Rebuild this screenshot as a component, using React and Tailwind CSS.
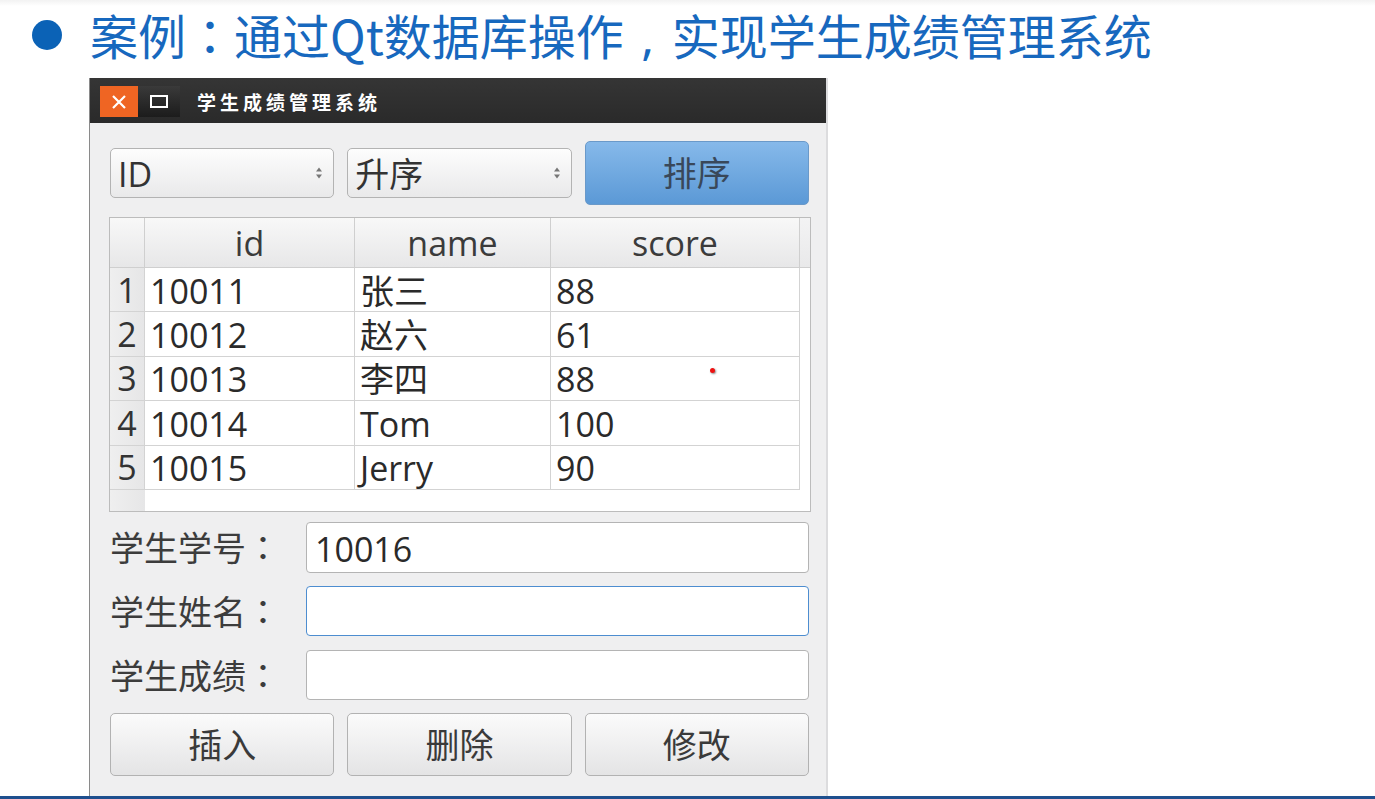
import React from "react";

const LAT = "font-['Open_Sans','Noto_Sans_CJK_SC',sans-serif]";
const TCP = "font-['Noto_Sans_CJK_TC',sans-serif]";

function Spinner() {
  return (
    <svg width="12" height="18" viewBox="0 0 12 18" className="shrink-0">
      <path d="M3 7.5 L6 3.5 L9 7.5 Z" fill="#767676" />
      <path d="M3 10.5 L6 14.5 L9 10.5 Z" fill="#767676" />
    </svg>
  );
}

function Combo({ text }) {
  return (
    <div className="h-[50px] self-center flex items-center justify-between pl-[7px] pr-[8px] rounded-[5px] border border-[#b3b3b3] bg-gradient-to-b from-[#fdfdfd] to-[#e9e9ea]">
      <span className={`${LAT} text-[34px] leading-none text-[#333] pt-[2px]`}>{text}</span>
      <Spinner />
    </div>
  );
}

function Btn({ text, blue }) {
  const cls = blue
    ? "h-[64px] border-[#6a99c9] bg-gradient-to-b from-[#86b9ea] to-[#5b99d6] text-[#39485a]"
    : "h-[63px] border-[#b2b2b2] bg-gradient-to-b from-[#fbfbfb] to-[#e4e4e5] text-[#3a3a3a]";
  return (
    <div className={`${cls} rounded-[5px] border flex items-center justify-center`}>
      <span className={`${LAT} text-[34px] leading-none`}>{text}</span>
    </div>
  );
}

const rows = [
  ["1", "10011", "张三", "88"],
  ["2", "10012", "赵六", "61"],
  ["3", "10013", "李四", "88"],
  ["4", "10014", "Tom", "100"],
  ["5", "10015", "Jerry", "90"],
];

function Table() {
  return (
    <div className="mt-[12px] -ml-px w-[702px] h-[295px] border border-[#bcbcbc] bg-white flex">
      <div className="flex flex-col">
        <div className="flex h-[50px] bg-gradient-to-b from-[#f8f8f8] to-[#e7e7e8] border-b border-[#cfcfcf]">
          <div className="w-[35px] border-r border-[#cfcfcf]" />
          {[["id", 210], ["name", 196], ["score", 249]].map(([t, w]) => (
            <div key={t} style={{ width: w }} className="border-r border-[#cfcfcf] flex items-center justify-center">
              <span className={`${LAT} text-[34px] leading-none text-[#3b3b3b]`}>{t}</span>
            </div>
          ))}
        </div>
        {rows.map((r) => (
          <div key={r[0]} className="flex h-[44.4px]">
            <div className="w-[35px] bg-gradient-to-r from-[#efefef] to-[#e6e6e7] border-r border-b border-[#d3d3d3] flex items-center justify-center">
              <span className={`${LAT} text-[34px] leading-none text-[#333]`}>{r[0]}</span>
            </div>
            {[[r[1], 210], [r[2], 196], [r[3], 249]].map(([t, w], i) => (
              <div key={i} style={{ width: w }} className="border-r border-b border-[#d3d3d3] flex items-center pl-[5px]">
                <span className={`${LAT} text-[34px] leading-none text-[#2a2a2a] pt-[2px]`}>{t}</span>
              </div>
            ))}
          </div>
        ))}
        <div className="flex-1 flex">
          <div className="w-[35px] bg-gradient-to-r from-[#efefef] to-[#e6e6e7]" />
        </div>
      </div>
      <div className="flex-1 flex flex-col">
        <div className="h-[50px] bg-gradient-to-b from-[#f3f3f4] to-[#e9e9ea] border-b border-[#cfcfcf]" />
      </div>
    </div>
  );
}

function Field({ label, value, focus, h, mt }) {
  return (
    <div className={`flex items-center ${mt}`}>
      <div className={`w-[196px] ${LAT} text-[34px] leading-none text-[#3c3c3c]`}>
        {label}
        <span className={TCP}>：</span>
      </div>
      <div
        className={`flex-1 ${h} rounded-[4px] bg-white flex items-center pl-[8px] ${
          focus ? "border-[1.5px] border-[#4d8dd0]" : "border border-[#b4b4b4]"
        }`}
      >
        <span className={`${LAT} text-[34px] leading-none text-[#2a2a2a] pt-[2px]`}>{value}</span>
      </div>
    </div>
  );
}

export default function App() {
  return (
    <div className="w-[1375px] h-[799px] bg-white relative overflow-hidden flex flex-col">
      <div className="h-[6px] bg-gradient-to-b from-[#f2f2f2] to-white" />
      <div className="flex items-center h-[62px] pl-[32px] -mt-[2px]">
        <div className="w-[30px] h-[30px] rounded-full bg-[#0b62b6]" />
        <div className="ml-[28px] font-['Noto_Sans_CJK_SC',sans-serif] text-[48px] leading-none text-[#1768be]">
          案例<span className={TCP}>：</span>通过Qt数据库操作
          <span className="inline-block w-[48px] text-center font-['Noto_Sans',sans-serif]">,</span>
          实现学生成绩管理系统
        </div>
      </div>
      <div className="ml-[89px] mt-[12px] w-[739px] h-[718px] flex flex-col bg-[#efeff0] border-l border-[#8a8a8a] border-r-2 border-r-[#dcdcde]">
        <div className="h-[45px] bg-gradient-to-b from-[#353535] to-[#2a2a2a] flex items-start pt-[8px] pl-[10px]">
          <div className="w-[38px] h-[31px] bg-[#ef6523] flex items-center justify-center">
            <svg width="16" height="16" viewBox="0 0 16 16">
              <path d="M2 2 L14 14 M14 2 L2 14" stroke="white" strokeWidth="2.2" />
            </svg>
          </div>
          <div className="w-[42px] h-[31px] bg-gradient-to-b from-[#3a3a3a] to-[#1c1c1c] flex items-center justify-center">
            <div className="w-[18px] h-[13px] border-2 border-white" />
          </div>
          <div className="ml-[17px] mt-[6px] font-['Noto_Sans_CJK_SC',sans-serif] font-bold text-[19px] tracking-[4px] leading-none text-white">
            学生成绩管理系统
          </div>
        </div>
        <div className="flex-1 flex flex-col pl-[20px] pr-[17px] pt-[18px]">
          <div className="grid grid-cols-3 gap-[13px] h-[64px]">
            <Combo text="ID" />
            <Combo text="升序" />
            <Btn text="排序" blue />
          </div>
          <Table />
          <Field label="学生学号" value="10016" h="h-[51px]" mt="mt-[10px]" />
          <Field label="学生姓名" value="" focus h="h-[50px]" mt="mt-[13px]" />
          <Field label="学生成绩" value="" h="h-[50px]" mt="mt-[14px]" />
          <div className="grid grid-cols-3 gap-[13px] mt-[13px]">
            <Btn text="插入" />
            <Btn text="删除" />
            <Btn text="修改" />
          </div>
        </div>
      </div>
      <div className="h-[3px] bg-[#1e4f8e]" />
      <div className="absolute left-[710px] top-[368px] w-[5px] h-[5px] rounded-full bg-[#ee1111] shadow-[1px_1px_2px_#888]" />
    </div>
  );
}
